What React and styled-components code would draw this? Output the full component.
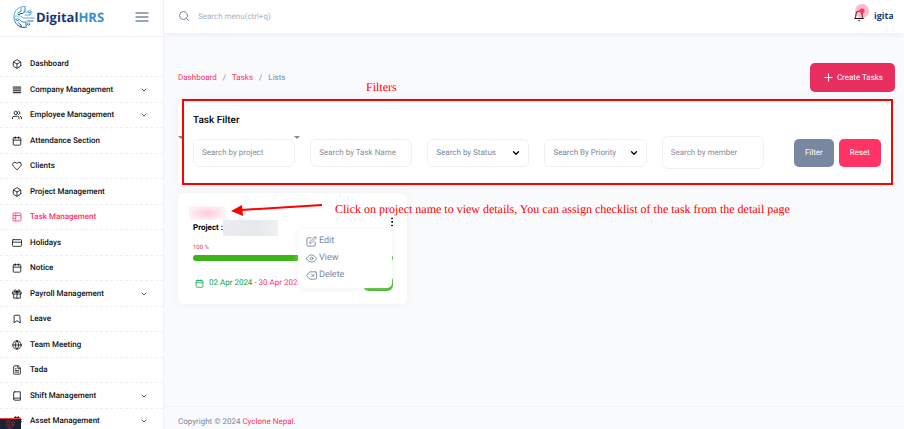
import { useState } from "react";
import styled, { createGlobalStyle } from "styled-components";
import {
  FiBell,
  FiBook,
  FiBookmark,
  FiBox,
  FiCalendar,
  FiChevronDown,
  FiCpu,
  FiCreditCard,
  FiDelete,
  FiEdit,
  FiEye,
  FiFileText,
  FiGift,
  FiGlobe,
  FiHeart,
  FiMenu,
  FiMoreVertical,
  FiPlus,
  FiSearch,
  FiUsers,
} from "react-icons/fi";
import { SiLaravel } from "react-icons/si";

function LinesIcon({ size }) {
  return (
    <svg width={size} height={size} viewBox="0 0 24 24" stroke="currentColor" strokeWidth="2.4">
      <path d="M2 5h20M2 9.500h20M2 14h20M2 18.500h20" />
    </svg>
  );
}

function TableIcon({ size }) {
  return (
    <svg width={size} height={size} viewBox="0 0 24 24" fill="none" stroke="currentColor" strokeWidth="2">
      <rect x="2.500" y="2.500" width="19" height="19" rx="2" />
      <path d="M3 8.500h18M3 15h6M9 3v18" />
    </svg>
  );
}

const links = [
  { label: "Dashboard", icon: FiBox },
  { label: "Company Management", icon: LinesIcon, nested: true },
  { label: "Employee Management", icon: FiUsers, nested: true },
  { label: "Attendance Section", icon: FiCalendar },
  { label: "Clients", icon: FiHeart },
  { label: "Project Management", icon: FiBox },
  { label: "Task Management", icon: TableIcon, active: true },
  { label: "Holidays", icon: FiCreditCard },
  { label: "Notice", icon: FiCalendar },
  { label: "Payroll Management", icon: FiGift, nested: true },
  { label: "Leave", icon: FiBookmark },
  { label: "Team Meeting", icon: FiGlobe },
  { label: "Tada", icon: FiFileText },
  { label: "Shift Management", icon: FiBook, nested: true },
  { label: "Asset Management", icon: FiCpu, nested: true },
];

function LogoMark() {
  return (
    <svg width="22" height="24" viewBox="0 0 44 48" fill="none" aria-hidden="true">
      <defs>
        <linearGradient id="mark" x1="0" y1="0" x2="0.3" y2="1">
          <stop offset="0" stopColor="#6fc8f2" />
          <stop offset="0.6" stopColor="#3b8fd0" />
          <stop offset="1" stopColor="#1c4482" />
        </linearGradient>
      </defs>
      <g stroke="url(#mark)" strokeWidth="2" strokeLinecap="round">
        <path d="M24 3C12 2 2 11 2 24s10 21 21 21" />
        <path d="M24 3v10l-5 4h-6M16 6v6l-5 4" />
        <path d="M5 22h11l4 4h22M4 29h9l5 5h8v11" />
        <path d="M24 20h10l4-5M22 14h9M28 32h12M10 35l6 5v4" />
      </g>
      <g fill="#fff" stroke="url(#mark)" strokeWidth="2">
        <circle cx="33" cy="13" r="2.4" />
        <circle cx="12" cy="17" r="2.4" />
        <circle cx="9" cy="29" r="2.2" />
        <circle cx="31" cy="38" r="2.4" />
      </g>
    </svg>
  );
}

function Sidebar() {
  return (
    <SidebarWrapper>
      <SidebarHeader>
        <Logo href="#">
          <LogoMark />
          <LogoText>
            Digital<span>HRS</span>
          </LogoText>
        </Logo>
        <IconButton aria-label="Toggle menu">
          <FiMenu size={16} strokeWidth={2} />
        </IconButton>
      </SidebarHeader>
      <NavList>
        {links.map(({ label, icon: Icon, nested, active }) => (
          <NavItem key={label}>
            <NavLink href="#" $active={active}>
              <Icon size={10} />
              <span>{label}</span>
              {nested ? <FiChevronDown size={8} /> : null}
            </NavLink>
          </NavItem>
        ))}
      </NavList>
    </SidebarWrapper>
  );
}

function Topbar() {
  return (
    <TopbarWrapper>
      <SearchLabel>
        <FiSearch size={12} />
        <SearchInput aria-label="Search menu" placeholder="Search menu(ctrl+q)" />
      </SearchLabel>
      <TopbarActions>
        <BellButton aria-label="Notifications">
          <FiBell size={12} />
          <Pulse />
        </BellButton>
        <Avatar>igita</Avatar>
      </TopbarActions>
    </TopbarWrapper>
  );
}

function TaskFilter() {
  return (
    <FilterCard>
      <CardTitle>Task Filter</CardTitle>
      <FilterForm onSubmit={(e) => e.preventDefault()}>
        <Field aria-label="Project" placeholder="Search by project" />
        <Field aria-label="Task name" placeholder="Search by Task Name" />
        <SelectWrapper>
          <Select aria-label="Status">
            <option>Search by Status</option>
          </Select>
          <FiChevronDown size={10} />
        </SelectWrapper>
        <SelectWrapper>
          <Select aria-label="Priority">
            <option>Search By Priority</option>
          </Select>
          <FiChevronDown size={10} />
        </SelectWrapper>
        <Field $tall aria-label="Member" placeholder="Search by member" />
        <FilterButtons>
          <Button $color="#7987a1">Filter</Button>
          <Button $color="#ff3366" type="reset">
            Reset
          </Button>
        </FilterButtons>
      </FilterForm>
      <Caret $left="0" />
      <Caret $left="116px" />
      <Highlight />
      <FilterNote>Filters</FilterNote>
    </FilterCard>
  );
}

function TaskCard() {
  const [isMenuShowing, setIsMenuShowing] = useState(true);

  return (
    <TaskCardWrapper>
      <HiddenName />
      <ProjectRow>
        <strong>Project :</strong>
        <HiddenProject />
      </ProjectRow>
      <Percent>100 %</Percent>
      <Progress />
      <TaskFooter>
        <FiCalendar size={9} />
        <Dates>
          02 Apr 2024 - <span>30 Apr 2024</span>
        </Dates>
        <Status />
      </TaskFooter>
      <MoreButton
        aria-label="Task actions"
        onClick={() => setIsMenuShowing(!isMenuShowing)}
      >
        <FiMoreVertical size={12} />
      </MoreButton>
      {isMenuShowing ? (
        <Menu>
          <MenuLink href="#">
            <FiEdit size={11} />
            Edit
          </MenuLink>
          <MenuLink href="#">
            <FiEye size={11} />
            View
          </MenuLink>
          <MenuLink href="#">
            <FiDelete size={11} />
            Delete
          </MenuLink>
        </Menu>
      ) : null}
      <Arrow width="92" height="14" viewBox="0 0 92 14" aria-hidden="true">
        <path d="M91 3L10 8" stroke="#f00" strokeWidth="2" />
        <path d="M0 9l11-6 1 11z" fill="#f00" />
      </Arrow>
      <TaskNote>
        Click on project name to view details, You can assign checklist of the
        task from the detail page
      </TaskNote>
    </TaskCardWrapper>
  );
}

function App() {
  return (
    <>
      <GlobalStyle />
      <Layout>
        <Sidebar />
        <Page>
          <Topbar />
          <Content>
            <PageHeader>
              <Breadcrumb aria-label="Breadcrumb">
                <a href="#">Dashboard</a>
                <i>/</i>
                <a href="#">Tasks</a>
                <i>/</i>
                <span>Lists</span>
              </Breadcrumb>
              <CreateButton>
                <FiPlus size={13} />
                Create Tasks
              </CreateButton>
            </PageHeader>
            <TaskFilter />
            <TaskCard />
          </Content>
          <Footer>
            Copyright © 2024 <a href="#">Cyclone Nepal.</a>
          </Footer>
        </Page>
      </Layout>
      <DebugTab aria-label="Open debug bar">
        <SiLaravel size={9} />
      </DebugTab>
    </>
  );
}

const GlobalStyle = createGlobalStyle`
  * {
    box-sizing: border-box;
  }

  body {
    background-color: #f9fafb;
    color: #000;
    font-family: Roboto, sans-serif;
    font-size: 8px;
    line-height: 14px;
    margin: 0;
    text-rendering: geometricPrecision;
  }

  button, input, select {
    font-family: inherit;
    font-size: inherit;
    text-rendering: inherit;
  }

  a {
    color: #ff3366;
    text-decoration: none;
  }
`;

const Layout = styled.div`
  display: flex;
  min-height: 100vh;
`;

const SidebarWrapper = styled.aside`
  background-color: #fff;
  border-right: 1px solid #f0f1f4;
  flex: none;
  height: 100vh;
  overflow: hidden;
  position: sticky;
  top: 0;
  width: 164px;
`;

const SidebarHeader = styled.div`
  align-items: center;
  border-bottom: 1px solid #f0f1f4;
  display: flex;
  height: 37px;
  justify-content: space-between;
  padding: 0 13px 2px;
`;

const Logo = styled.a`
  align-items: center;
  display: flex;
  gap: 1px;
`;

const LogoText = styled.span`
  color: #163a78;
  font-family: "Open Sans", sans-serif;
  font-size: 13px;
  font-weight: 700;

  span {
    color: #3590cc;
  }
`;

const IconButton = styled.button`
  background-color: transparent;
  border: none;
  color: #7987a1;
  cursor: pointer;
  display: flex;
  padding: 0;
`;

const NavList = styled.ul`
  list-style: none;
  margin: 0;
  padding: 15px 0 0;
`;

const NavItem = styled.li`
  border-bottom: 1px dashed #f0f0f3;
  height: 25px;

  &:nth-child(even) {
    height: 26px;
  }
`;

const NavLink = styled.a`
  align-items: center;
  color: ${(props) => (props.$active ? "#ff3366" : "#111")};
  display: flex;
  font-weight: 500;
  gap: 8px;
  height: 100%;
  padding: 0 15px 0 12px;

  span {
    flex: 1;
  }
`;

const Page = styled.div`
  display: flex;
  flex: 1;
  flex-direction: column;
  min-width: 0;
`;

const TopbarWrapper = styled.header`
  align-items: center;
  background-color: #fff;
  box-shadow: 0 1px 6px #e9ebf0;
  display: flex;
  height: 33px;
  justify-content: space-between;
  padding: 0 11px 1px 14px;
`;

const SearchLabel = styled.label`
  align-items: center;
  color: #7987a1;
  display: flex;
  flex: 1;
  gap: 8px;
`;

const SearchInput = styled.input`
  background-color: transparent;
  border: none;
  flex: 1;
  outline: none;
  padding: 0;

  &::placeholder {
    color: #a9b2c3;
  }
`;

const TopbarActions = styled.div`
  align-items: center;
  display: flex;
  gap: 9px;
`;

const BellButton = styled(IconButton)`
  color: #111;
  position: relative;
`;

const Pulse = styled.span`
  background: radial-gradient(circle, #ff3366 2px, #f43b6659 3px);
  border-radius: 50%;
  height: 14px;
  position: absolute;
  right: -4px;
  top: -6px;
  width: 14px;
`;

const Avatar = styled.span`
  color: #163a78;
  font-family: "Open Sans", sans-serif;
  font-size: 9px;
  font-weight: 700;
  overflow: hidden;
  width: 19px;
`;

const Content = styled.main`
  flex: 1;
  padding: 30px 9px 20px 14px;
`;

const PageHeader = styled.div`
  align-items: center;
  display: flex;
  justify-content: space-between;
  margin-bottom: 7px;
`;

const Breadcrumb = styled.nav`
  color: #7987a1;
  display: flex;
  gap: 6px;

  i {
    font-style: normal;
  }
`;

const Button = styled.button`
  background-color: ${(props) => props.$color};
  border: none;
  border-radius: 5px;
  color: #fff;
  cursor: pointer;
  height: 28px;
  padding: 0 11px;
`;

const CreateButton = styled.button`
  align-items: center;
  background-color: #e82e5f;
  border: none;
  border-radius: 5px;
  color: #fff;
  cursor: pointer;
  display: flex;
  gap: 2px;
  height: 29px;
  padding: 0 12px;
`;

const Card = styled.section`
  background-color: #fff;
  border-radius: 6px;
  box-shadow: 0 0 6px #eef0f4;
  position: relative;
`;

const FilterCard = styled(Card)`
  margin-bottom: 8px;
  padding: 15px 14px 16px 15px;
`;

const CardTitle = styled.h2`
  font-size: 10px;
  font-weight: 500;
  line-height: 14px;
  margin: 0 0 8px;
`;

const FilterForm = styled.form`
  align-items: center;
  display: grid;
  gap: 15px;
  grid-template-columns: repeat(6, minmax(0, 1fr));
`;

const Field = styled.input`
  background-color: #fff;
  border: 1px solid #f0f1f4;
  border-radius: 6px;
  height: ${(props) => (props.$tall ? "33px" : "28px")};
  padding: 0 8px;
  width: 100%;

  &::placeholder {
    color: #8e8e93;
  }
`;

const SelectWrapper = styled.div`
  position: relative;

  svg {
    pointer-events: none;
    position: absolute;
    right: 8px;
    stroke-width: 3;
    top: 9px;
  }
`;

const Select = styled.select`
  appearance: none;
  background-color: #fff;
  border: 1px solid #f0f1f4;
  border-radius: 6px;
  color: #7987a1;
  height: 28px;
  padding: 0 8px;
  width: 100%;
`;

const FilterButtons = styled.div`
  display: flex;
  gap: 5px;
  justify-content: flex-end;
`;

const Caret = styled.span`
  border-left: 3px solid transparent;
  border-right: 3px solid transparent;
  border-top: 3px solid #888;
  left: ${(props) => props.$left};
  position: absolute;
  top: 37px;
`;

const Highlight = styled.div`
  border: 2px solid #f00;
  inset: 0 2px 0 4px;
  pointer-events: none;
  position: absolute;
`;

const Note = styled.p`
  color: #f00;
  font-family: "Liberation Serif", serif;
  font-size: 12px;
  margin: 0;
  position: absolute;
  white-space: nowrap;
`;

const FilterNote = styled(Note)`
  left: 188px;
  top: -19px;
`;

const TaskCardWrapper = styled(Card)`
  max-width: 229px;
  padding: 13px 14px 13px 15px;
`;

const HiddenName = styled.div`
  background: radial-gradient(ellipse, #fbc9d7, #fef3f6 75%);
  height: 14px;
  margin-left: -4px;
  width: 36px;
`;

const ProjectRow = styled.div`
  align-items: center;
  display: flex;
  height: 16px;

  strong {
    font-weight: 700;
  }
`;

const HiddenProject = styled.div`
  background: linear-gradient(90deg, #ececef, #e6e8ed 60%, #eff0f3);
  height: 16px;
  width: 55px;
`;

const Percent = styled.div`
  color: #e82e5f;
  font-size: 6px;
  line-height: 10px;
  margin-top: 7px;
`;

const Progress = styled.div`
  background-color: #3cb317;
  border-radius: 3px;
  height: 6px;
  margin-top: 2px;
`;

const TaskFooter = styled.div`
  align-items: center;
  color: #05a34a;
  display: flex;
  gap: 5px;
  margin-top: 14px;
  padding-left: 2px;
`;

const Dates = styled.span`
  flex: 1;

  span {
    color: #ff3366;
  }
`;

const Status = styled.span`
  background-color: #3cb317;
  border-radius: 6px;
  height: 16px;
  width: 30px;
`;

const MoreButton = styled(IconButton)`
  color: #000;
  position: absolute;
  right: 9px;
  top: 23px;
`;

const Menu = styled.div`
  background-color: #fff;
  border-radius: 5px;
  box-shadow: 0 1px 6px #dfe3ea80;
  padding: 4px 8px;
  position: absolute;
  right: 15px;
  top: 36px;
  width: 94px;
`;

const MenuLink = styled.a`
  align-items: center;
  color: #7987a1;
  display: flex;
  font-size: 9px;
  gap: 2px;
  line-height: 17px;
`;

const Arrow = styled.svg`
  left: 53px;
  position: absolute;
  top: 9px;
`;

const TaskNote = styled(Note)`
  left: 157px;
  top: 9px;
`;

const Footer = styled.footer`
  border-top: 1px solid #eff1f4;
  color: #7987a1;
  padding: 8px 14px 0;
`;

const DebugTab = styled.button`
  align-items: center;
  background-color: #1b2333;
  border: none;
  border-top: 1px solid #f4433c;
  bottom: 0;
  color: #e0343a;
  cursor: pointer;
  display: flex;
  height: 11px;
  justify-content: center;
  left: 0;
  padding: 0;
  position: fixed;
  width: 21px;
`;

export default App;
